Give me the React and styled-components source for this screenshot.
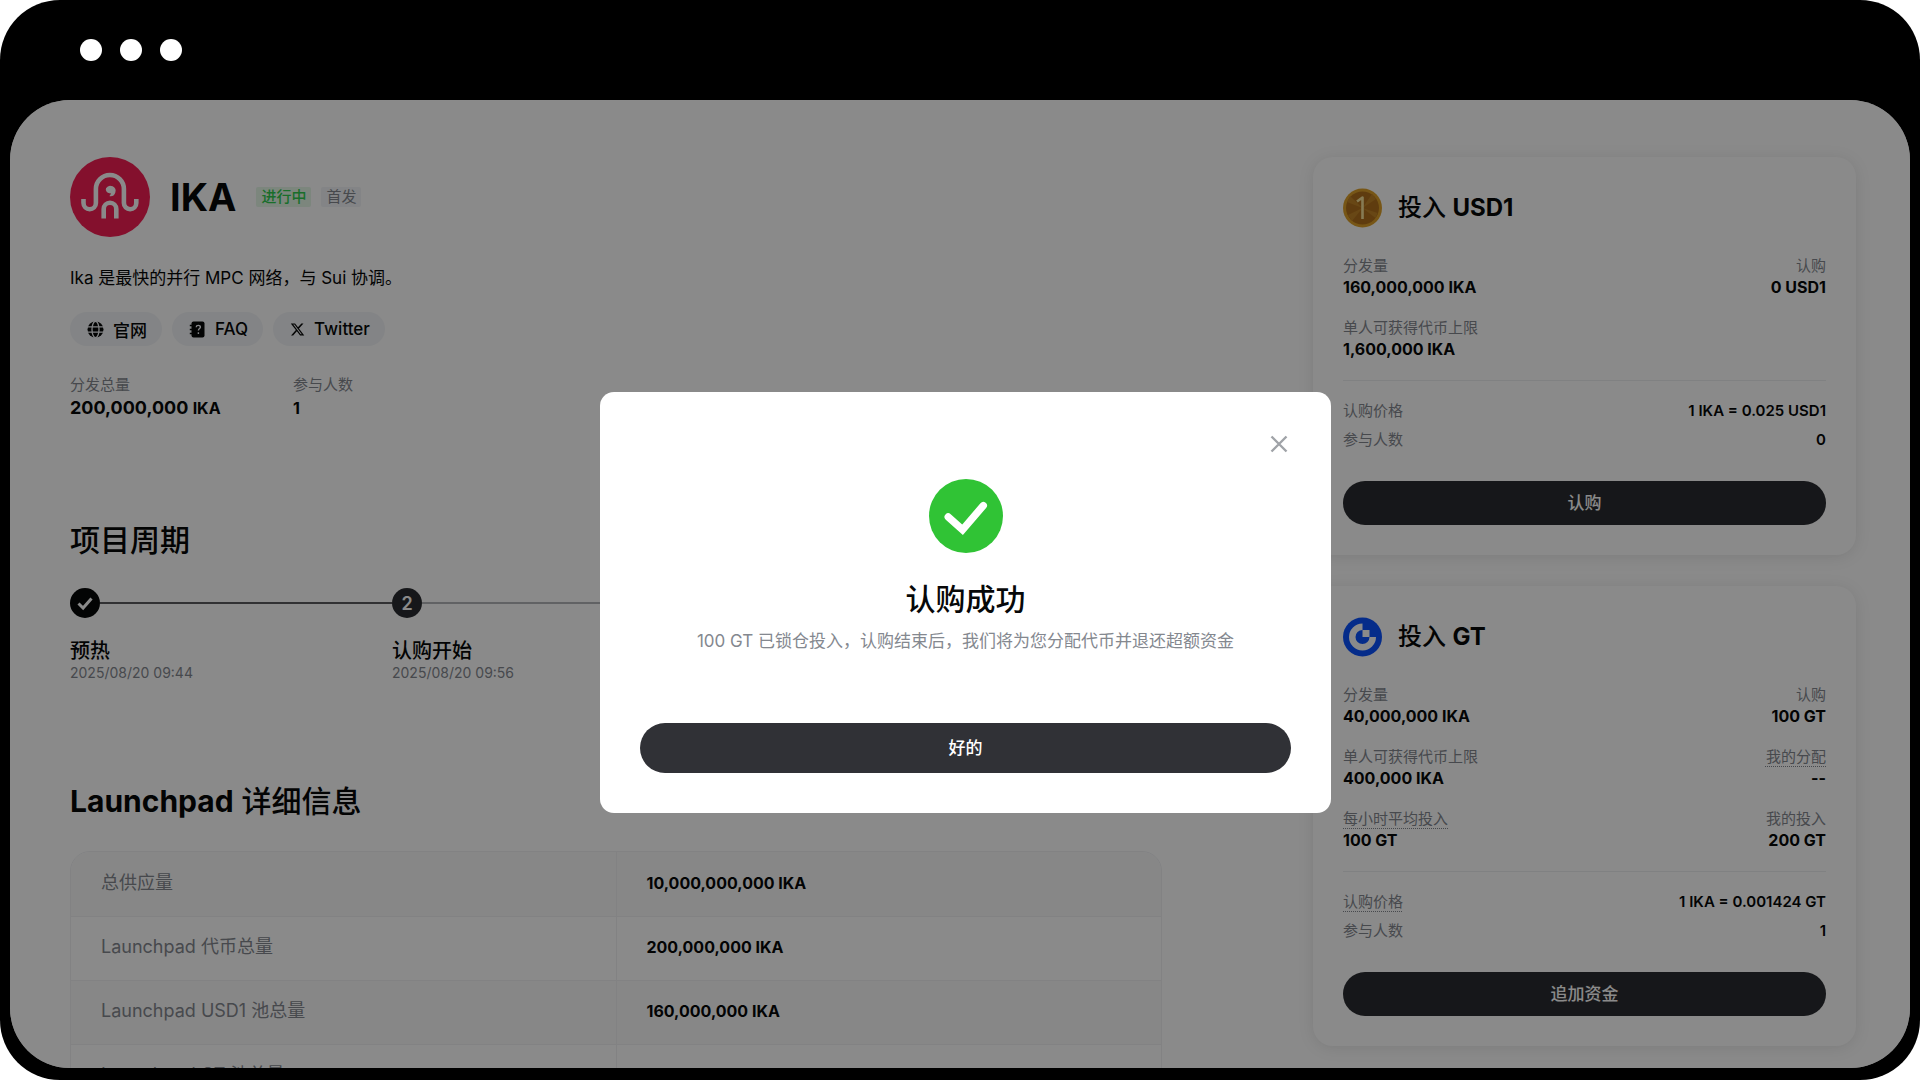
import React, { useState } from "react";
import styled, { createGlobalStyle } from "styled-components";
import { FaXTwitter } from "react-icons/fa6";

const GlobalStyle = createGlobalStyle`
  * {
    box-sizing: border-box;
  }
  body {
    margin: 0;
    background: #fff;
    color: #070808;
    font-family: Inter, "Noto Sans CJK SC", sans-serif;
  }
  h1, h2, h3, p, ol, dl, dd {
    margin: 0;
    padding: 0;
  }
  button {
    font-family: inherit;
    cursor: pointer;
  }
`;

const Frame = styled.div`
  height: 100vh;
  display: flex;
  flex-direction: column;
  padding: 0 10px 12px;
  background: #000;
  border-radius: 60px;
  overflow: hidden;
`;

const TitleBar = styled.div`
  flex: none;
  display: flex;
  align-items: center;
  gap: 18px;
  height: 100px;
  padding-left: 70px;
`;

const Dot = styled.span`
  width: 22px;
  height: 22px;
  border-radius: 50%;
  background: #fff;
`;

const Screen = styled.div`
  position: relative;
  flex: 1;
  min-height: 0;
  background: #fff;
  border-radius: 60px;
  overflow: hidden;
`;

const Page = styled.div`
  display: grid;
  grid-template-columns: minmax(0, 1092fr) minmax(0, 543fr);
  gap: 151px;
  align-items: start;
  padding: 57px 54px 0 60px;
`;

const ProjectHead = styled.header`
  display: flex;
  align-items: center;
  gap: 20px;
`;

const ProjectName = styled.h1`
  font-size: 38px;
  line-height: 48px;
  font-weight: 700;
`;

const Tags = styled.div`
  display: flex;
  gap: 10px;
`;

const Tag = styled.span`
  padding: 0 5px;
  border-radius: 2px;
  font-size: 15px;
  line-height: 20px;
  font-weight: ${(props) => (props.$active ? 500 : 400)};
  color: ${(props) => (props.$active ? "#2fcb4f" : "#84888f")};
  background: ${(props) => (props.$active ? "#e5f7e8" : "#f2f4f7")};
`;

const Intro = styled.p`
  margin-top: 28px;
  font-size: 17px;
  line-height: 26px;
`;

const Links = styled.nav`
  display: flex;
  gap: 10px;
  margin-top: 21px;
`;

const PillLink = styled.a`
  display: flex;
  align-items: center;
  gap: 9px;
  height: 34px;
  padding: 0 15px 0 17px;
  border-radius: 17px;
  background: #f2f4f7;
  color: #070808;
  font-size: 17px;
  font-weight: 500;
  text-decoration: none;
`;

const Totals = styled.dl`
  display: grid;
  grid-template-columns: 223px 223px;
  margin-top: 27px;
`;

const Label = styled.dt`
  font-size: 15px;
  line-height: 24px;
  color: #84888f;
`;

const Hint = styled.span`
  text-decoration: ${(props) => (props.$dotted ? "underline dotted 1px" : "none")};
  text-underline-offset: 4px;
`;

const TotalValue = styled.dd`
  font-size: 18px;
  line-height: 22px;
  font-weight: 700;
`;

const Unit = styled.span`
  font-size: 16px;
`;

const SectionTitle = styled.h2`
  margin-top: ${(props) => props.$gap};
  font-size: 30px;
  line-height: 40px;
  font-weight: 500;
`;

const Strong = styled.span`
  font-weight: 700;
`;

const Steps = styled.ol`
  display: grid;
  grid-template-columns: 322fr 770fr;
  margin-top: 28px;
  list-style: none;
`;

const StepTrack = styled.div`
  display: flex;
  align-items: center;
  height: 30px;
`;

const StepMark = styled.span`
  display: flex;
  align-items: center;
  justify-content: center;
  width: 30px;
  height: 30px;
  border-radius: 50%;
  background: ${(props) => (props.$done ? "#070808" : "#2a2c30")};
  color: #fff;
  font-size: 18px;
  font-weight: 600;
`;

const StepLine = styled.span`
  flex: 1;
  height: 2px;
  background: ${(props) => (props.$done ? "#5c5c5e" : "#b4b6ba")};
`;

const StepName = styled.h3`
  margin-top: 19px;
  font-size: 20px;
  line-height: 28px;
  font-weight: 500;
`;

const StepDate = styled.p`
  font-size: 14px;
  line-height: 16px;
  color: #84888f;
`;

const TableFrame = styled.div`
  margin-top: 30px;
  border: 1px solid #f0f1f3;
  border-radius: 20px;
  overflow: hidden;
`;

const InfoTable = styled.table`
  width: 100%;
  table-layout: fixed;
  border-collapse: collapse;
  font-size: 18px;
  line-height: 24px;
  text-align: left;

  tr:nth-child(odd) {
    background: #f9f9fa;
  }
  tr + tr {
    border-top: 1px solid #f0f1f3;
  }
  th,
  td {
    height: 64px;
    padding: 0 30px 2px;
  }
  th {
    font-weight: 400;
    color: #84888f;
  }
  td {
    border-left: 1px solid #f0f1f3;
    font-size: 16px;
    font-weight: 700;
  }
`;

const Pools = styled.aside`
  display: flex;
  flex-direction: column;
  gap: 31px;
`;

const Card = styled.section`
  padding: 31px 30px 30px;
  border-radius: 20px;
  background: #fff;
  box-shadow: 0 2px 16px rgba(0, 0, 0, 0.1);
`;

const CardHead = styled.header`
  display: flex;
  align-items: center;
  gap: 16px;
  margin-bottom: 26px;
`;

const CardTitle = styled.h2`
  font-size: 24px;
  line-height: 36px;
  font-weight: 500;
`;

const StatGrid = styled.dl`
  display: grid;
  grid-template-columns: 1fr auto;
  row-gap: 20px;
  padding-bottom: 22px;
  border-bottom: 1px solid #eceef0;
`;

const Stat = styled.div`
  text-align: ${(props) => props.$align};
`;

const StatValue = styled.dd`
  font-size: 16px;
  line-height: 18px;
  font-weight: 700;
`;

const Lines = styled.dl`
  display: flex;
  flex-direction: column;
  gap: 5px;
  padding: 18px 0 29px;
`;

const Line = styled.div`
  display: flex;
  justify-content: space-between;
`;

const LineValue = styled.dd`
  font-size: 15px;
  line-height: 24px;
  font-weight: 600;
`;

const DarkButton = styled.button`
  display: block;
  width: 100%;
  height: ${(props) => (props.$large ? "50px" : "44px")};
  padding: 0 0 3px;
  border: 0;
  border-radius: 25px;
  background: ${(props) => (props.$large ? "#303136" : "#2a2c30")};
  color: #fff;
  font-size: 17px;
  font-weight: 500;
`;

const Overlay = styled.div`
  position: absolute;
  inset: 0;
  display: flex;
  align-items: center;
  justify-content: center;
  padding: 37px 0 0 11px;
  background: rgba(0, 0, 0, 0.46);
`;

const Dialog = styled.div`
  display: flex;
  flex-direction: column;
  align-items: center;
  width: 731px;
  max-width: 90%;
  padding: 40px;
  border-radius: 14px;
  background: #fff;
`;

const CloseButton = styled.button`
  align-self: flex-end;
  display: flex;
  align-items: center;
  justify-content: center;
  width: 24px;
  height: 24px;
  margin-bottom: 23px;
  padding: 0;
  border: 0;
  background: none;
  color: #a0a3a8;
`;

const DialogTitle = styled.h2`
  margin-top: 26px;
  font-size: 30px;
  line-height: 40px;
  font-weight: 500;
`;

const DialogText = styled.p`
  margin: 10px 0 70px;
  font-size: 17px;
  line-height: 24px;
  color: #84888f;
`;

const IkaLogo = () => (
  <svg width="80" height="80" viewBox="0 0 80 80" fill="none">
    <circle cx="40" cy="40" r="40" fill="#f41f54" />
    <g stroke="#fff" strokeWidth="4.6">
      <path d="M13.500 42v4a6.200 6.200 0 0 0 12.400 0V32a14 14 0 0 1 28 0v14a6.200 6.200 0 0 0 12.400 0v-4" />
      <path d="M33.700 61.500V52a6.300 6.300 0 0 1 12.600 0v9.500" />
    </g>
    <path d="M36 31.200a5.200 5.200 0 1 1 3.200 7.900c1.200-1 1.600-2.100 1.400-3.200a3.600 3.600 0 0 1-4.600-4.700z" fill="#fff" />
  </svg>
);

const UsdCoin = () => (
  <svg width="39" height="40" viewBox="0 0 39 40">
    <circle cx="19.500" cy="20" r="19.500" fill="#dda02a" />
    <circle cx="19.500" cy="20" r="16.500" fill="#b0701c" />
    <path d="M19.500 20L4 14l3-6zM19.500 20L9 33l-4-6zM19.500 20l15 5-2 5zM19.500 20L29 6l4 5z" fill="#c08428" />
    <path d="M14 13.500l5.500-4V31" fill="none" stroke="#f8e49c" strokeWidth="2.600" strokeLinejoin="round" />
  </svg>
);

const GateCoin = () => (
  <svg width="39" height="40" viewBox="0 0 39 40">
    <circle cx="19.500" cy="20" r="19.500" fill="#0a52ff" />
    <path d="M19.500 6.500v6.500a7 7 0 1 0 7 7h6.500a13.500 13.500 0 1 1-13.500-13.500z" fill="#fff" />
    <path d="M19.500 13h7v7h-7z" fill="#fff" />
  </svg>
);

const GlobeIcon = () => (
  <svg width="17" height="17" viewBox="0 0 17 17">
    <circle cx="8.500" cy="8.500" r="8" fill="#070808" />
    <g fill="none" stroke="#f2f4f7" strokeWidth="1.300">
      <ellipse cx="8.500" cy="8.500" rx="3.500" ry="8.200" />
      <path d="M0 5.900h17M0 11.200h17" />
    </g>
  </svg>
);

const FaqIcon = () => (
  <svg width="17" height="17" viewBox="0 0 17 17" fill="none">
    <rect x="2.500" y=".5" width="13" height="16" rx="2" fill="#070808" />
    <path d="M.8 4.500h3M.8 8.500h3M.8 12.500h3" stroke="#070808" strokeWidth="1.600" />
    <path d="M7.200 6.200c.2-2.600 4.300-2.300 4.200 0-.1 1.300-2 1.500-2 3.300M9.400 11.200v1.700" stroke="#f2f4f7" strokeWidth="1.400" />
  </svg>
);

const CheckIcon = () => (
  <svg width="18" height="18" viewBox="0 0 18 18" fill="none">
    <path d="M2.500 9.500l4.600 4.500 8.400-9.500" stroke="#fff" strokeWidth="3" />
  </svg>
);

const SuccessIcon = () => (
  <svg width="74" height="74" viewBox="0 0 75 75" fill="none">
    <circle cx="37.500" cy="37.500" r="37.500" fill="#30c335" />
    <path d="M19.500 38.500l14.500 13 21-24.500" stroke="#fff" strokeWidth="7.500" strokeLinecap="round" />
  </svg>
);

const CloseIcon = () => (
  <svg width="18" height="18" viewBox="0 0 18 18" fill="none">
    <path d="M1.500 1.500l15 15M16.500 1.500l-15 15" stroke="currentColor" strokeWidth="2.400" />
  </svg>
);

const steps = [
  { name: "预热", date: "2025/08/20 09:44", done: true },
  { name: "认购开始", date: "2025/08/20 09:56" },
];

const details = [
  ["总供应量", "10,000,000,000 IKA"],
  ["Launchpad 代币总量", "200,000,000 IKA"],
  ["Launchpad USD1 池总量", "160,000,000 IKA"],
  ["Launchpad GT 池总量", "40,000,000 IKA"],
];

const pools = [
  {
    coin: "USD1",
    icon: <UsdCoin />,
    stats: [
      { label: "分发量", value: "160,000,000 IKA" },
      { label: "认购", value: "0 USD1" },
      { label: "单人可获得代币上限", value: "1,600,000 IKA" },
    ],
    lines: [
      { label: "认购价格", value: "1 IKA = 0.025 USD1" },
      { label: "参与人数", value: "0" },
    ],
    action: "认购",
  },
  {
    coin: "GT",
    icon: <GateCoin />,
    stats: [
      { label: "分发量", value: "40,000,000 IKA" },
      { label: "认购", value: "100 GT" },
      { label: "单人可获得代币上限", value: "400,000 IKA" },
      { label: "我的分配", value: "--", dotted: true },
      { label: "每小时平均投入", value: "100 GT", dotted: true },
      { label: "我的投入", value: "200 GT" },
    ],
    lines: [
      { label: "认购价格", value: "1 IKA = 0.001424 GT", dotted: true },
      { label: "参与人数", value: "1" },
    ],
    action: "追加资金",
  },
];

const Timeline = () => (
  <Steps>
    {steps.map((step, i) => (
      <li key={step.name}>
        <StepTrack>
          <StepMark $done={step.done}>
            {step.done ? <CheckIcon /> : i + 1}
          </StepMark>
          <StepLine $done={step.done} />
        </StepTrack>
        <StepName>{step.name}</StepName>
        <StepDate>{step.date}</StepDate>
      </li>
    ))}
  </Steps>
);

const PoolCard = ({ pool }) => (
  <Card>
    <CardHead>
      {pool.icon}
      <CardTitle>
        投入 <Strong>{pool.coin}</Strong>
      </CardTitle>
    </CardHead>
    <StatGrid>
      {pool.stats.map((stat, i) => (
        <Stat key={stat.label} $align={i % 2 ? "right" : "left"}>
          <Label>
            <Hint $dotted={stat.dotted}>{stat.label}</Hint>
          </Label>
          <StatValue>{stat.value}</StatValue>
        </Stat>
      ))}
    </StatGrid>
    <Lines>
      {pool.lines.map((line) => (
        <Line key={line.label}>
          <Label>
            <Hint $dotted={line.dotted}>{line.label}</Hint>
          </Label>
          <LineValue>{line.value}</LineValue>
        </Line>
      ))}
    </Lines>
    <DarkButton type="button">{pool.action}</DarkButton>
  </Card>
);

const SuccessDialog = ({ onClose }) => (
  <Overlay>
    <Dialog role="dialog" aria-modal="true" aria-labelledby="dialog-title">
      <CloseButton type="button" aria-label="关闭" onClick={onClose}>
        <CloseIcon />
      </CloseButton>
      <SuccessIcon />
      <DialogTitle id="dialog-title">认购成功</DialogTitle>
      <DialogText>
        100 GT 已锁仓投入，认购结束后，我们将为您分配代币并退还超额资金
      </DialogText>
      <DarkButton type="button" $large onClick={onClose}>
        好的
      </DarkButton>
    </Dialog>
  </Overlay>
);

const App = () => {
  const [showDialog, setShowDialog] = useState(true);
  return (
    <Frame>
      <GlobalStyle />
      <TitleBar>
        <Dot />
        <Dot />
        <Dot />
      </TitleBar>
      <Screen>
        <Page>
          <main>
            <ProjectHead>
              <IkaLogo />
              <ProjectName>IKA</ProjectName>
              <Tags>
                <Tag $active>进行中</Tag>
                <Tag>首发</Tag>
              </Tags>
            </ProjectHead>
            <Intro>Ika 是最快的并行 MPC 网络，与 Sui 协调。</Intro>
            <Links>
              <PillLink href="#site">
                <GlobeIcon />
                官网
              </PillLink>
              <PillLink href="#faq">
                <FaqIcon />
                FAQ
              </PillLink>
              <PillLink href="#twitter">
                <FaXTwitter size={15} />
                Twitter
              </PillLink>
            </Links>
            <Totals>
              <div>
                <Label>分发总量</Label>
                <TotalValue>
                  200,000,000 <Unit>IKA</Unit>
                </TotalValue>
              </div>
              <div>
                <Label>参与人数</Label>
                <TotalValue>
                  <Unit>1</Unit>
                </TotalValue>
              </div>
            </Totals>
            <SectionTitle $gap="101px">项目周期</SectionTitle>
            <Timeline />
            <SectionTitle $gap="100px">
              <Strong>Launchpad</Strong> 详细信息
            </SectionTitle>
            <TableFrame>
              <InfoTable>
                <tbody>
                  {details.map(([name, value]) => (
                    <tr key={name}>
                      <th scope="row">{name}</th>
                      <td>{value}</td>
                    </tr>
                  ))}
                </tbody>
              </InfoTable>
            </TableFrame>
          </main>
          <Pools>
            {pools.map((pool) => (
              <PoolCard key={pool.coin} pool={pool} />
            ))}
          </Pools>
        </Page>
        {showDialog && <SuccessDialog onClose={() => setShowDialog(false)} />}
      </Screen>
    </Frame>
  );
};

export default App;
